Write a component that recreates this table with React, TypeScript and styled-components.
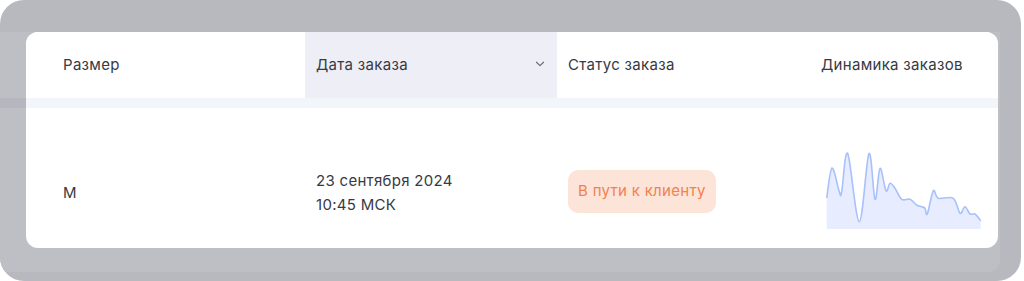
import React from "react";
import styled, { createGlobalStyle } from "styled-components";

const GlobalStyle = createGlobalStyle`
  html, body { margin: 0; padding: 0; background: #ffffff; }
  body { font-family: "Inter", "Noto Sans", sans-serif; }
`;

// points of the order dynamics chart, in chart-local coords (156 x 77)
const trend: [number, number][] = [
  [0.7, 46], [6, 16], [13.3, 39.7], [15.7, 39.7], [21.7, 1.5], [33.3, 69.7],
  [43, 1.5], [49, 47.3], [54, 16.3], [60, 38.7], [64, 31.3], [69, 36.3],
  [75.7, 47.3], [84, 47.3], [90.7, 53], [95.7, 54.7], [99, 56.3], [101.3, 62],
  [107.3, 38.7], [112.3, 46.3], [127.3, 46.3], [134, 61.3], [139, 54.7],
  [144, 62], [149, 62], [154.7, 68.7],
];

const smoothPath = (pts: [number, number][]): string => {
  let d = `M${pts[0][0]},${pts[0][1]}`;
  for (let i = 0; i < pts.length - 1; i++) {
    const p0 = pts[i - 1] || pts[i];
    const p1 = pts[i];
    const p2 = pts[i + 1];
    const p3 = pts[i + 2] || p2;
    const c1x = p1[0] + (p2[0] - p0[0]) / 6;
    const c1y = p1[1] + (p2[1] - p0[1]) / 6;
    const c2x = p2[0] - (p3[0] - p1[0]) / 6;
    const c2y = p2[1] - (p3[1] - p1[1]) / 6;
    d += ` C${c1x.toFixed(1)},${c1y.toFixed(1)} ${c2x.toFixed(1)},${c2y.toFixed(1)} ${p2[0]},${p2[1]}`;
  }
  return d;
};

const Frame = styled.div`
  width: 1021px;
  height: 281px;
  background: #b7b9bf;
  border-radius: 24px;
  padding-top: 32px;
  box-sizing: border-box;
  overflow: hidden;
`;

const Backdrop = styled.div`
  width: 1000px;
  height: 240px;
  background: #bebfc5;
  border-bottom-right-radius: 12px;
  display: flex;
`;

const Gutter = styled.div`
  width: 26px;
  display: grid;
  grid-template-rows: 66px 10px 1fr;
`;

const GutterLine = styled.div`
  background: #b5b7be;
`;

const Card = styled.div`
  width: 972px;
  height: 216px;
  background: #ffffff;
  border-radius: 12px;
  overflow: hidden;
  display: grid;
  grid-template-columns: 279px 252px 253px 1fr;
  grid-template-rows: 66px 10px 140px;
  color: #383943;
  font-size: 15px;
  letter-spacing: 0.3px;
`;

const HeadCell = styled.div<{ $active?: boolean; $first?: boolean }>`
  display: flex;
  align-items: center;
  justify-content: space-between;
  padding: 0 ${(p) => (p.$active ? "12px" : "0")} 2px ${(p) => (p.$first ? "37px" : "11px")};
  background: ${(p) => (p.$active ? "#eeeef6" : "#ffffff")};
`;

const Divider = styled.div`
  grid-column: 1 / -1;
  background: #f2f5f9;
`;

const BodyCell = styled.div<{ $first?: boolean }>`
  display: flex;
  align-items: center;
  padding: 29px 0 0 ${(p) => (p.$first ? "37px" : "11px")};
  line-height: 24px;
`;

const DateText = styled.div`
  display: flex;
  flex-direction: column;
`;

const Badge = styled.span`
  display: inline-flex;
  align-items: center;
  height: 43px;
  padding: 0 10px;
  margin-top: -3px;
  border-radius: 10px;
  background: #fde4d8;
  color: #f3804f;
`;

const Chevron = () => (
  <svg width="10" height="6" viewBox="0 0 10 6" fill="none">
    <path d="M1.5 1.2 L5 4.6 L8.5 1.2" stroke="#6e717b" strokeWidth="1.3" strokeLinecap="round" strokeLinejoin="round" />
  </svg>
);

const Sparkline = () => {
  const line = smoothPath(trend);
  const last = trend[trend.length - 1];
  const area = `${line} L${last[0]},77 L${trend[0][0]},77 Z`;
  return (
    <svg width="156" height="77" viewBox="0 0 156 77" style={{ marginLeft: 5, marginTop: -4 }}>
      <path d={area} fill="#e7edff" />
      <path d={line} fill="none" stroke="#a8c0fb" strokeWidth="1.6" strokeLinejoin="round" />
    </svg>
  );
};

export default function App() {
  return (
    <>
      <GlobalStyle />
      <Frame>
        <Backdrop>
          <Gutter>
            <div />
            <GutterLine />
            <div />
          </Gutter>
          <Card>
            <HeadCell $first>Размер</HeadCell>
            <HeadCell $active>
              Дата заказа
              <Chevron />
            </HeadCell>
            <HeadCell>Статус заказа</HeadCell>
            <HeadCell>Динамика заказов</HeadCell>

            <Divider />

            <BodyCell $first>M</BodyCell>
            <BodyCell>
              <DateText>
                <span>23 сентября 2024</span>
                <span>10:45 МСК</span>
              </DateText>
            </BodyCell>
            <BodyCell>
              <Badge>В пути к клиенту</Badge>
            </BodyCell>
            <BodyCell>
              <Sparkline />
            </BodyCell>
          </Card>
        </Backdrop>
      </Frame>
    </>
  );
}
